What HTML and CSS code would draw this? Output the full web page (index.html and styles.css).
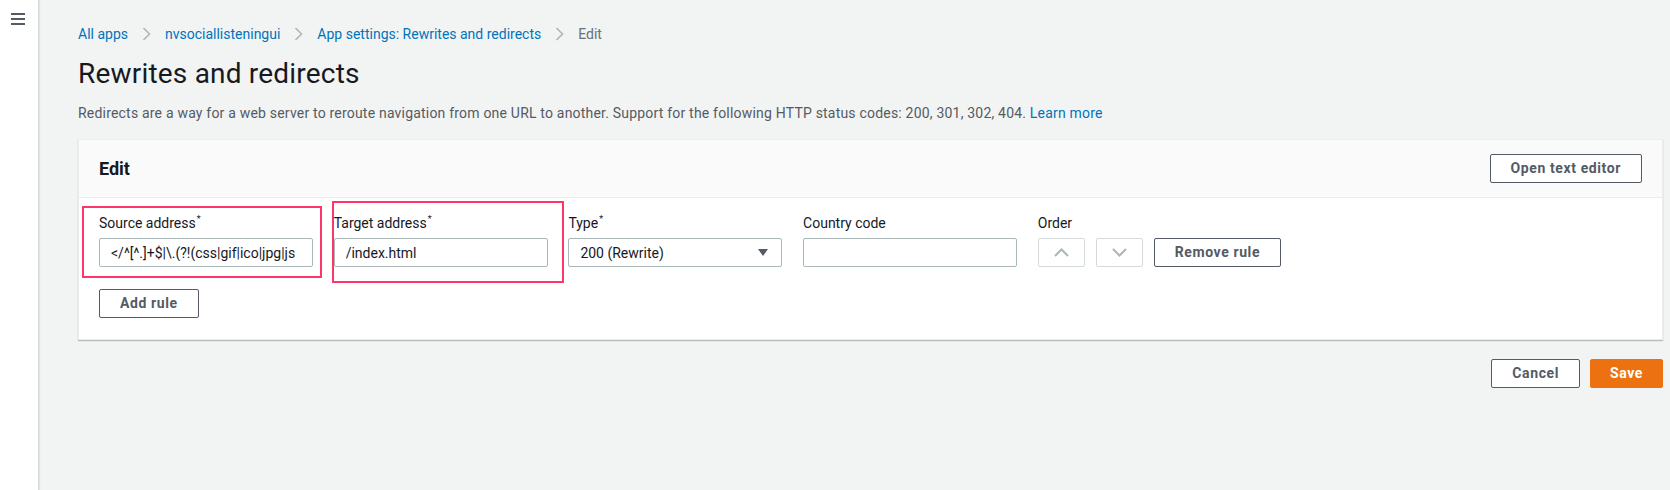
FILE: index.html
```html
<!DOCTYPE html>
<html lang="en">
<head>
<meta charset="utf-8">
<title>Rewrites and redirects</title>
<link rel="stylesheet" href="styles.css">
</head>
<body>
<div class="app">
  <aside class="sidebar">
    <button class="menu-btn" aria-label="Open navigation">
      <svg width="16" height="14" viewBox="0 0 16 14"><path d="M1 2h14M1 7h14M1 12h14" stroke="#545b64" stroke-width="2" fill="none"/></svg>
    </button>
  </aside>
  <main class="main">
    <nav class="breadcrumbs">
      <a class="crumb-link" href="#">All apps</a>
      <svg class="crumb-sep" width="9" height="14" viewBox="0 0 9 14"><path d="M1.5 1l6 6-6 6" stroke="#aab7b8" stroke-width="1.6" fill="none"/></svg>
      <a class="crumb-link" href="#">nvsociallisteningui</a>
      <svg class="crumb-sep" width="9" height="14" viewBox="0 0 9 14"><path d="M1.5 1l6 6-6 6" stroke="#aab7b8" stroke-width="1.6" fill="none"/></svg>
      <a class="crumb-link" href="#">App settings: Rewrites and redirects</a>
      <svg class="crumb-sep" width="9" height="14" viewBox="0 0 9 14"><path d="M1.5 1l6 6-6 6" stroke="#aab7b8" stroke-width="1.6" fill="none"/></svg>
      <span class="crumb-current">Edit</span>
    </nav>
    <h1 class="page-title">Rewrites and redirects</h1>
    <p class="page-desc">Redirects are a way for a web server to reroute navigation from one URL to another. Support for the following HTTP status codes: 200, 301, 302, 404. <a class="link" href="#">Learn more</a></p>

    <section class="card">
      <header class="card-header">
        <h2 class="card-title">Edit</h2>
        <button class="btn">Open text editor</button>
      </header>
      <div class="card-body">
        <div class="rule-row">
          <div class="field field-source">
            <label class="field-label">Source address<sup class="req">*</sup></label>
            <input class="text-input" type="text" value="&lt;/^[^.]+$|\.(?!(css|gif|ico|jpg|js" readonly>
            <span class="highlight highlight-source"></span>
          </div>
          <div class="field field-target">
            <label class="field-label">Target address<sup class="req">*</sup></label>
            <input class="text-input" type="text" value="/index.html" readonly>
            <span class="highlight highlight-target"></span>
          </div>
          <div class="field">
            <label class="field-label">Type<sup class="req">*</sup></label>
            <div class="select">
              <span>200 (Rewrite)</span>
              <svg width="10" height="7" viewBox="0 0 10 7"><path d="M0 0h10L5 7z" fill="#545b64"/></svg>
            </div>
          </div>
          <div class="field">
            <label class="field-label">Country code</label>
            <input class="text-input" type="text" value="" readonly>
          </div>
          <div class="field">
            <label class="field-label">Order</label>
            <div class="order-controls">
              <button class="icon-btn" aria-label="Move up">
                <svg width="15" height="9" viewBox="0 0 15 9"><path d="M1 8l6.5-6.5L14 8" stroke="#aab7b8" stroke-width="2" fill="none"/></svg>
              </button>
              <button class="icon-btn" aria-label="Move down">
                <svg width="15" height="9" viewBox="0 0 15 9"><path d="M1 1l6.5 6.5L14 1" stroke="#aab7b8" stroke-width="2" fill="none"/></svg>
              </button>
              <button class="btn">Remove rule</button>
            </div>
          </div>
        </div>
        <div class="add-row">
          <button class="btn btn-add">Add rule</button>
        </div>
      </div>
    </section>

    <div class="actions">
      <button class="btn">Cancel</button>
      <button class="btn btn-primary">Save</button>
    </div>
  </main>
</div>
</body>
</html>
```

FILE: styles.css
```css
* { box-sizing: border-box; }

html, body {
  margin: 0;
  padding: 0;
  height: 100%;
}

body {
  font-family: Roboto, "Liberation Sans", Arial, sans-serif;
  font-size: 14px;
  line-height: 20px;
  color: #16191f;
  background: #f2f3f3;
}

.app {
  display: flex;
  min-height: 100vh;
}

.sidebar {
  width: 39px;
  flex: none;
  background: #ffffff;
  border-right: 1px solid #d5dbdb;
  box-shadow: 1px 0 1px rgba(0, 28, 36, 0.08);
}

.menu-btn {
  display: block;
  margin: 12px 0 0 10px;
  padding: 0;
  border: 0;
  background: none;
  width: 16px;
  height: 14px;
}
.menu-btn svg { display: block; }

.main {
  flex: 1;
  padding: 24px 7px 20px 39px;
}

.breadcrumbs {
  display: flex;
  align-items: center;
  height: 20px;
}
.crumb-link {
  color: #0073bb;
  text-decoration: none;
}
.crumb-sep {
  margin: 0 14px;
  flex: none;
}
.crumb-current {
  color: #687078;
}

.page-title {
  margin: 12px 0 0;
  font-size: 28px;
  line-height: 36px;
  font-weight: 400;
  letter-spacing: 0.2px;
  color: #16191f;
}

.page-desc {
  margin: 11px 0 0;
  color: #545b64;
  letter-spacing: 0.2px;
}
.link {
  color: #0073bb;
  text-decoration: none;
}

.card {
  margin-top: 16px;
  background: #ffffff;
  border: 1px solid #eaeded;
  box-shadow: 0 1px 1px 0 rgba(0, 28, 36, 0.25);
}

.card-header {
  display: flex;
  align-items: center;
  justify-content: space-between;
  padding: 14px 20px 14px 20px;
  background: #fafafa;
  border-bottom: 1px solid #eaeded;
}

.card-title {
  margin: 0;
  font-size: 18px;
  line-height: 24px;
  font-weight: 700;
  color: #16191f;
}

.card-body {
  padding: 15px 20px 21px;
}

.rule-row {
  display: grid;
  grid-template-columns: repeat(4, 214px) auto;
  column-gap: 20.7px;
  align-items: start;
}

.field {
  position: relative;
  display: flex;
  flex-direction: column;
}

.field-label {
  display: block;
  height: 20px;
  line-height: 20px;
  color: #16191f;
}
.req {
  font-size: 9px;
  line-height: 0;
  vertical-align: 6px;
  margin-left: 1px;
}

.text-input {
  margin-top: 5px;
  width: 100%;
  height: 29px;
  padding: 0 11px;
  border: 1px solid #aab7b8;
  border-radius: 2px;
  background: #ffffff;
  font-family: inherit;
  font-size: 14px;
  color: #16191f;
  outline: none;
}

.select {
  margin-top: 5px;
  height: 29px;
  padding: 0 13px 0 11px;
  display: flex;
  align-items: center;
  justify-content: space-between;
  border: 1px solid #aab7b8;
  border-radius: 2px;
  background: #ffffff;
  color: #16191f;
}
.select svg { flex: none; }

.order-controls {
  margin-top: 5px;
  display: flex;
  gap: 11px;
}

.icon-btn {
  width: 47px;
  height: 29px;
  padding: 0;
  display: flex;
  align-items: center;
  justify-content: center;
  border: 1px solid #d5dbdb;
  border-radius: 2px;
  background: #ffffff;
}

.btn {
  height: 29px;
  padding: 0 20px;
  border: 1px solid #545b64;
  border-radius: 2px;
  background: #ffffff;
  color: #545b64;
  font-family: inherit;
  font-size: 14px;
  font-weight: 700;
  line-height: 27px;
  letter-spacing: 0.6px;
  white-space: nowrap;
}

.btn-primary {
  background: #ec7211;
  border-color: #ec7211;
  color: #ffffff;
  padding: 0 19px;
}

.add-row {
  margin-top: 22px;
  display: flex;
}

.highlight {
  position: absolute;
  border: 2px solid #fb3668;
  pointer-events: none;
}
.highlight-source {
  left: -17px;
  right: -9px;
  top: -7px;
  bottom: -11px;
}
.highlight-target {
  left: -2px;
  right: -16px;
  top: -12px;
  bottom: -16px;
}

.actions {
  margin-top: 19px;
  display: flex;
  justify-content: flex-end;
  gap: 10px;
}
```
